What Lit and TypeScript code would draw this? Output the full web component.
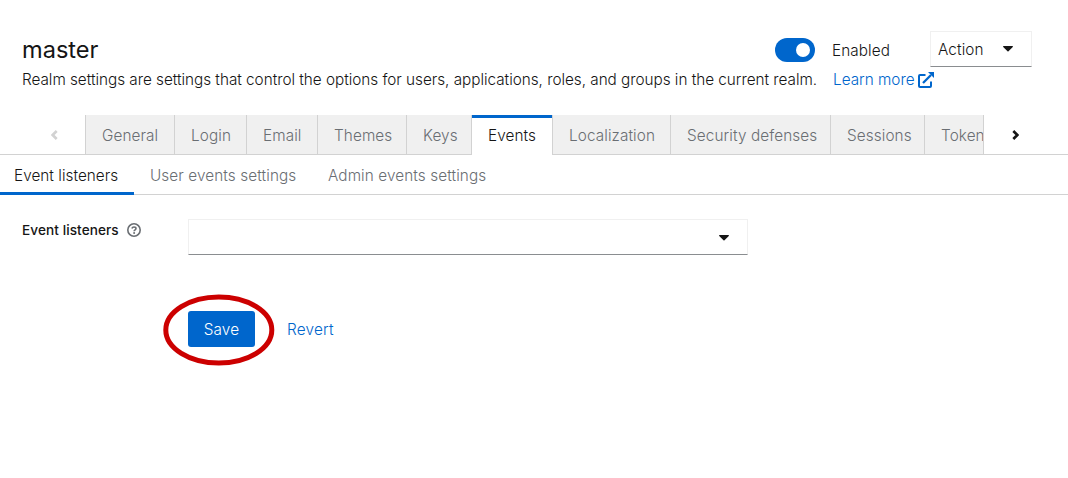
import { LitElement, html, css, svg } from "lit";
import { classMap } from "lit/directives/class-map.js";

const TABS = [
  { label: "General", width: 89 },
  { label: "Login", width: 72 },
  { label: "Email", width: 71 },
  { label: "Themes", width: 89 },
  { label: "Keys", width: 65 },
  { label: "Events", width: 82, current: true },
  { label: "Localization", width: 117 },
  { label: "Security defenses", width: 160 },
  { label: "Sessions", width: 94 },
  { label: "Tokens", width: 90 },
];

const caret = html`<svg class="caret" viewBox="0 0 10 6" width="10" height="6">
  <path d="M.7 0h8.6c.6 0 .9.6.5 1L5.5 5.300a.7.7 0 0 1-1 0L.2 1C-.2.6.1 0 .7 0z" fill="#151515" />
</svg>`;

const chevron = svg`<path d="M1.300 1 5.400 5 1.300 9" fill="none" stroke="currentColor" stroke-width="2.700" />`;

class AppRoot extends LitElement {
  static styles = css`
    :host {
      display: block;
      height: 478px;
      overflow: hidden;
      background: #fff;
      color: #151515;
      font: 300 15.3px/24px Inter, "Open Sans", sans-serif;
      letter-spacing: 0.1px;
      white-space: nowrap;
    }
    * { box-sizing: border-box; }
    svg { display: block; flex: none; }
    a { color: #06c; text-decoration: none; }
    .title-row {
      display: flex;
      align-items: center;
      height: 36px;
      margin: 31px 36px 0 22px;
    }
    h1 {
      flex: 1;
      margin: 2px 0 0;
      font-size: 23.6px;
      font-weight: 400;
      letter-spacing: 0;
    }
    .switch {
      display: flex;
      align-items: center;
      justify-content: flex-end;
      width: 40px;
      height: 24px;
      padding-right: 5px;
      margin-top: 2px;
      border-radius: 12px;
      background: #06c;
    }
    .knob { width: 14px; height: 14px; border-radius: 50%; background: #fff; }
    .enabled { width: 98px; margin: 4px 0 0 17px; }
    .action {
      display: flex;
      align-items: center;
      justify-content: space-between;
      width: 102px;
      height: 36px;
      padding: 0 18px 0 7px;
      border: 1px solid #f0f0f0;
      border-bottom-color: #8a8d90;
    }
    .action span { padding-top: 2px; }
    .description {
      display: flex;
      align-items: center;
      height: 24px;
      margin: 1px 0 0 22px;
    }
    .description p { width: 811px; margin: 0; letter-spacing: -0.023px; }
    .learn { display: flex; align-items: center; gap: 3px; letter-spacing: 0; }
    .tabs {
      display: flex;
      height: 40px;
      margin-top: 23px;
      background: linear-gradient(#d2d2d2, #d2d2d2) bottom / 100% 1px no-repeat;
    }
    .scroll {
      display: flex;
      align-items: center;
      justify-content: center;
      width: 85px;
      padding-left: 23px;
      color: #d2d2d2;
    }
    .scroll.next { width: 84px; padding: 0 21px 0 0; color: #151515; }
    .strip { display: flex; width: 899px; overflow: hidden; border-right: 1px solid #d2d2d2; }
    .tab {
      flex: none;
      height: 39px;
      padding: 9px 0 0 16px;
      border-left: 1px solid #d2d2d2;
      background: #f0f0f0;
      color: #6a6e73;
    }
    .tab.current {
      height: 40px;
      border-right: 1px solid #d2d2d2;
      background: linear-gradient(#06c, #06c) top / 100% 3px no-repeat border-box, #fff;
      color: #151515;
    }
    .tab.current + .tab { border-left: 0; }
    .subtabs { display: flex; height: 40px; border-bottom: 1px solid #d2d2d2; color: #6a6e73; }
    .subtab { height: 40px; padding: 9px 0 0 16px; width: 178px; }
    .subtab.first { width: 134px; padding-left: 14px; border-bottom: 3px solid #06c; color: #151515; letter-spacing: 0.04px; }
    .form { display: grid; grid-template-columns: 166px 560px; margin: 24px 0 0 22px; }
    .label {
      display: flex;
      align-items: center;
      gap: 8px;
      height: 22px;
      font-size: 13.6px;
      font-weight: 500;
      letter-spacing: 0.08px;
    }
    .select {
      display: flex;
      align-items: center;
      justify-content: flex-end;
      height: 36px;
      padding: 2px 18px 0 0;
      border: 1px solid #f0f0f0;
      border-bottom-color: #8a8d90;
    }
    .buttons { position: relative; grid-column: 2; display: flex; gap: 32px; margin-top: 56px; line-height: 38px; letter-spacing: 0.2px; }
    .save { width: 67px; height: 36px; border-radius: 3px; background: #06c; color: #fff; text-align: center; }
    .ring { position: absolute; left: -26px; top: -18px; }
  `;

  render() {
    return html`
      <header>
        <div class="title-row">
          <h1>master</h1>
          <span class="switch"><span class="knob"></span></span>
          <span class="enabled">Enabled</span>
          <div class="action"><span>Action</span>${caret}</div>
        </div>
        <div class="description">
          <p>Realm settings are settings that control the options for users, applications, roles, and groups in the current realm.</p>
          <a class="learn">Learn more
            <svg width="16" height="16" viewBox="0 0 16 16" fill="none" stroke="#06c">
              <path d="M7.500 3H2a1 1 0 0 0-1 1v10a1 1 0 0 0 1 1h10a1 1 0 0 0 1-1V9.500" stroke-width="2" />
              <path d="M5 11 13 3" stroke-width="2.300" />
              <path d="M10 0h6v6z" fill="#06c" stroke="none" />
            </svg>
          </a>
        </div>
      </header>
      <nav class="tabs">
        <span class="scroll"><svg width="7" height="10" viewBox="0 0 7 10"><g transform="matrix(-1 0 0 1 7 0)">${chevron}</g></svg></span>
        <div class="strip">
          ${TABS.map((t) => html`<div class=${classMap({ tab: true, current: !!t.current })} style="width:${t.width}px">${t.label}</div>`)}
        </div>
        <span class="scroll next"><svg width="7" height="10" viewBox="0 0 7 10">${chevron}</svg></span>
      </nav>
      <nav class="subtabs">
        <span class="subtab first">Event listeners</span>
        <span class="subtab">User events settings</span>
        <span class="subtab">Admin events settings</span>
      </nav>
      <section class="form">
        <div class="label">Event listeners
          <svg width="14" height="14" viewBox="0 0 14 14" fill="none" stroke="#6a6e73">
            <circle cx="7" cy="7" r="6.200" stroke-width="1.600" />
            <path d="M4.900 5.500C5.200 4.400 6 4 7 4c1.200 0 2 .7 2 1.600C9 6.900 7.100 6.800 7.100 8.300" stroke-width="1.600" />
            <circle cx="7.100" cy="10.100" r="1" fill="#6a6e73" stroke="none" />
          </svg>
        </div>
        <div class="select">${caret}</div>
        <div class="buttons">
          <span class="save">Save</span>
          <a>Revert</a>
          <svg class="ring" width="114" height="74" viewBox="0 0 114 74">
            <ellipse cx="56.800" cy="37" rx="53" ry="33" fill="none" stroke="#c00" stroke-width="5" />
          </svg>
        </div>
      </section>
    `;
  }
}
customElements.define("app-root", AppRoot);
